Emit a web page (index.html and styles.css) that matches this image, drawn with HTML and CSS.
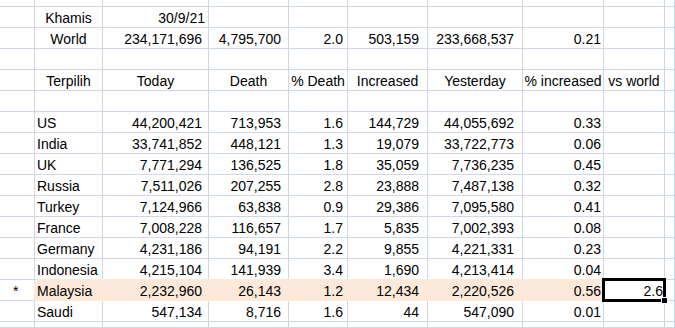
FILE: index.html
```html
<!DOCTYPE html>
<html>
<head>
<meta charset="utf-8">
<link rel="stylesheet" href="styles.css">
</head>
<body>
<table class="sheet">
  <colgroup>
    <col class="w-a"><col class="w-b"><col class="w-c"><col class="w-d"><col class="w-e"><col class="w-f"><col class="w-g"><col class="w-h"><col class="w-i"><col class="w-j">
  </colgroup>
  <tr class="top"><td></td><td></td><td></td><td></td><td></td><td></td><td></td><td></td><td></td><td></td></tr>
  <tr><td></td><td class="ctr">Khamis</td><td class="num date">30/9/21</td><td></td><td></td><td></td><td></td><td></td><td></td><td></td></tr>
  <tr><td></td><td class="ctr">World</td><td class="num c">234,171,696</td><td class="num d">4,795,700</td><td class="num e">2.0</td><td class="num f">503,159</td><td class="num g">233,668,537</td><td class="num h">0.21</td><td></td><td></td></tr>
  <tr><td></td><td></td><td></td><td></td><td></td><td></td><td></td><td></td><td></td><td></td></tr>
  <tr><td></td><td class="ctr">Terpilih</td><td class="ctr">Today</td><td class="ctr">Death</td><td class="ctr">% Death</td><td class="ctr">Increased</td><td class="ctr">Yesterday</td><td class="ctr">% increased</td><td class="ctr">vs world</td><td></td></tr>
  <tr><td></td><td></td><td></td><td></td><td></td><td></td><td></td><td></td><td></td><td></td></tr>
  <tr><td></td><td class="name">US</td><td class="num c">44,200,421</td><td class="num d">713,953</td><td class="num e">1.6</td><td class="num f">144,729</td><td class="num g">44,055,692</td><td class="num h">0.33</td><td></td><td></td></tr>
  <tr><td></td><td class="name">India</td><td class="num c">33,741,852</td><td class="num d">448,121</td><td class="num e">1.3</td><td class="num f">19,079</td><td class="num g">33,722,773</td><td class="num h">0.06</td><td></td><td></td></tr>
  <tr><td></td><td class="name">UK</td><td class="num c">7,771,294</td><td class="num d">136,525</td><td class="num e">1.8</td><td class="num f">35,059</td><td class="num g">7,736,235</td><td class="num h">0.45</td><td></td><td></td></tr>
  <tr><td></td><td class="name">Russia</td><td class="num c">7,511,026</td><td class="num d">207,255</td><td class="num e">2.8</td><td class="num f">23,888</td><td class="num g">7,487,138</td><td class="num h">0.32</td><td></td><td></td></tr>
  <tr><td></td><td class="name">Turkey</td><td class="num c">7,124,966</td><td class="num d">63,838</td><td class="num e">0.9</td><td class="num f">29,386</td><td class="num g">7,095,580</td><td class="num h">0.41</td><td></td><td></td></tr>
  <tr><td></td><td class="name">France</td><td class="num c">7,008,228</td><td class="num d">116,657</td><td class="num e">1.7</td><td class="num f">5,835</td><td class="num g">7,002,393</td><td class="num h">0.08</td><td></td><td></td></tr>
  <tr><td></td><td class="name">Germany</td><td class="num c">4,231,186</td><td class="num d">94,191</td><td class="num e">2.2</td><td class="num f">9,855</td><td class="num g">4,221,331</td><td class="num h">0.23</td><td></td><td></td></tr>
  <tr><td></td><td class="name">Indonesia</td><td class="num c">4,215,104</td><td class="num d">141,939</td><td class="num e">3.4</td><td class="num f">1,690</td><td class="num g">4,213,414</td><td class="num h">0.04</td><td></td><td></td></tr>
  <tr class="hl-row"><td class="star hl-edge">*</td><td class="name hl">Malaysia</td><td class="num c hl">2,232,960</td><td class="num d hl">26,143</td><td class="num e hl">1.2</td><td class="num f hl">12,434</td><td class="num g hl">2,220,526</td><td class="num h hl">0.56</td><td class="num i sel">2.6</td><td></td></tr>
  <tr><td></td><td class="name">Saudi</td><td class="num c">547,134</td><td class="num d">8,716</td><td class="num e">1.6</td><td class="num f">44</td><td class="num g">547,090</td><td class="num h">0.01</td><td></td><td></td></tr>
  <tr class="bottom"><td></td><td></td><td></td><td></td><td></td><td></td><td></td><td></td><td></td><td></td></tr>
</table>
</body>
</html>
```

FILE: styles.css
```css
html, body {
  margin: 0;
  padding: 0;
  background: #ffffff;
  overflow: hidden;
}

.sheet {
  border-collapse: separate;
  border-spacing: 0;
  table-layout: fixed;
  width: 675px;
  font-family: "Liberation Sans", Arial, sans-serif;
  font-size: 14px;
  color: #000000;
}

.w-a { width: 35px; }
.w-b { width: 68px; }
.w-c { width: 106px; }
.w-d { width: 80px; }
.w-e { width: 59px; }
.w-f { width: 80px; }
.w-g { width: 95px; }
.w-h { width: 81px; }
.w-i { width: 61px; }
.w-j { width: 10px; }

.sheet td {
  height: 19px;
  padding: 0 0 1px 0;
  line-height: 16px;
  vertical-align: bottom;
  border-right: 1px solid #d0d7e5;
  border-bottom: 1px solid #d0d7e5;
  white-space: nowrap;
  overflow: visible;
  box-sizing: content-box;
}

.sheet tr.top td {
  height: 6px;
  padding: 0;
  line-height: 6px;
}

.sheet tr.bottom td {
  height: 5px;
  padding: 0;
  line-height: 5px;
}

.ctr { text-align: center; }
.name { text-align: left; padding-left: 2px !important; }
.num { text-align: right; }
.date { padding-right: 3px !important; }
.c { padding-right: 6px !important; }
.d { padding-right: 7px !important; }
.e { padding-right: 4px !important; }
.f { padding-right: 8px !important; }
.g { padding-right: 8px !important; }
.h { padding-right: 2px !important; }
.i { padding-right: 1px !important; }

.star {
  text-align: left;
  padding-left: 13px !important;
}

.sheet td.hl {
  background: #fde9d9;
  border-right-color: #fde9d9;
  border-bottom-color: #fde9d9;
  box-shadow: 0 -1px 0 #fde9d9;
}

.sheet td.hl-edge {
  border-right-color: #fde9d9;
}

.sel {
  position: relative;
}

.sel::after {
  content: "";
  position: absolute;
  left: -2px;
  top: -2px;
  right: -2px;
  bottom: -2px;
  border: 3px solid #000000;
  pointer-events: none;
}

.sel::before {
  content: "";
  position: absolute;
  right: -4px;
  bottom: -4px;
  width: 5px;
  height: 5px;
  background: #000000;
  border: 1px solid #ffffff;
  z-index: 1;
}
```
